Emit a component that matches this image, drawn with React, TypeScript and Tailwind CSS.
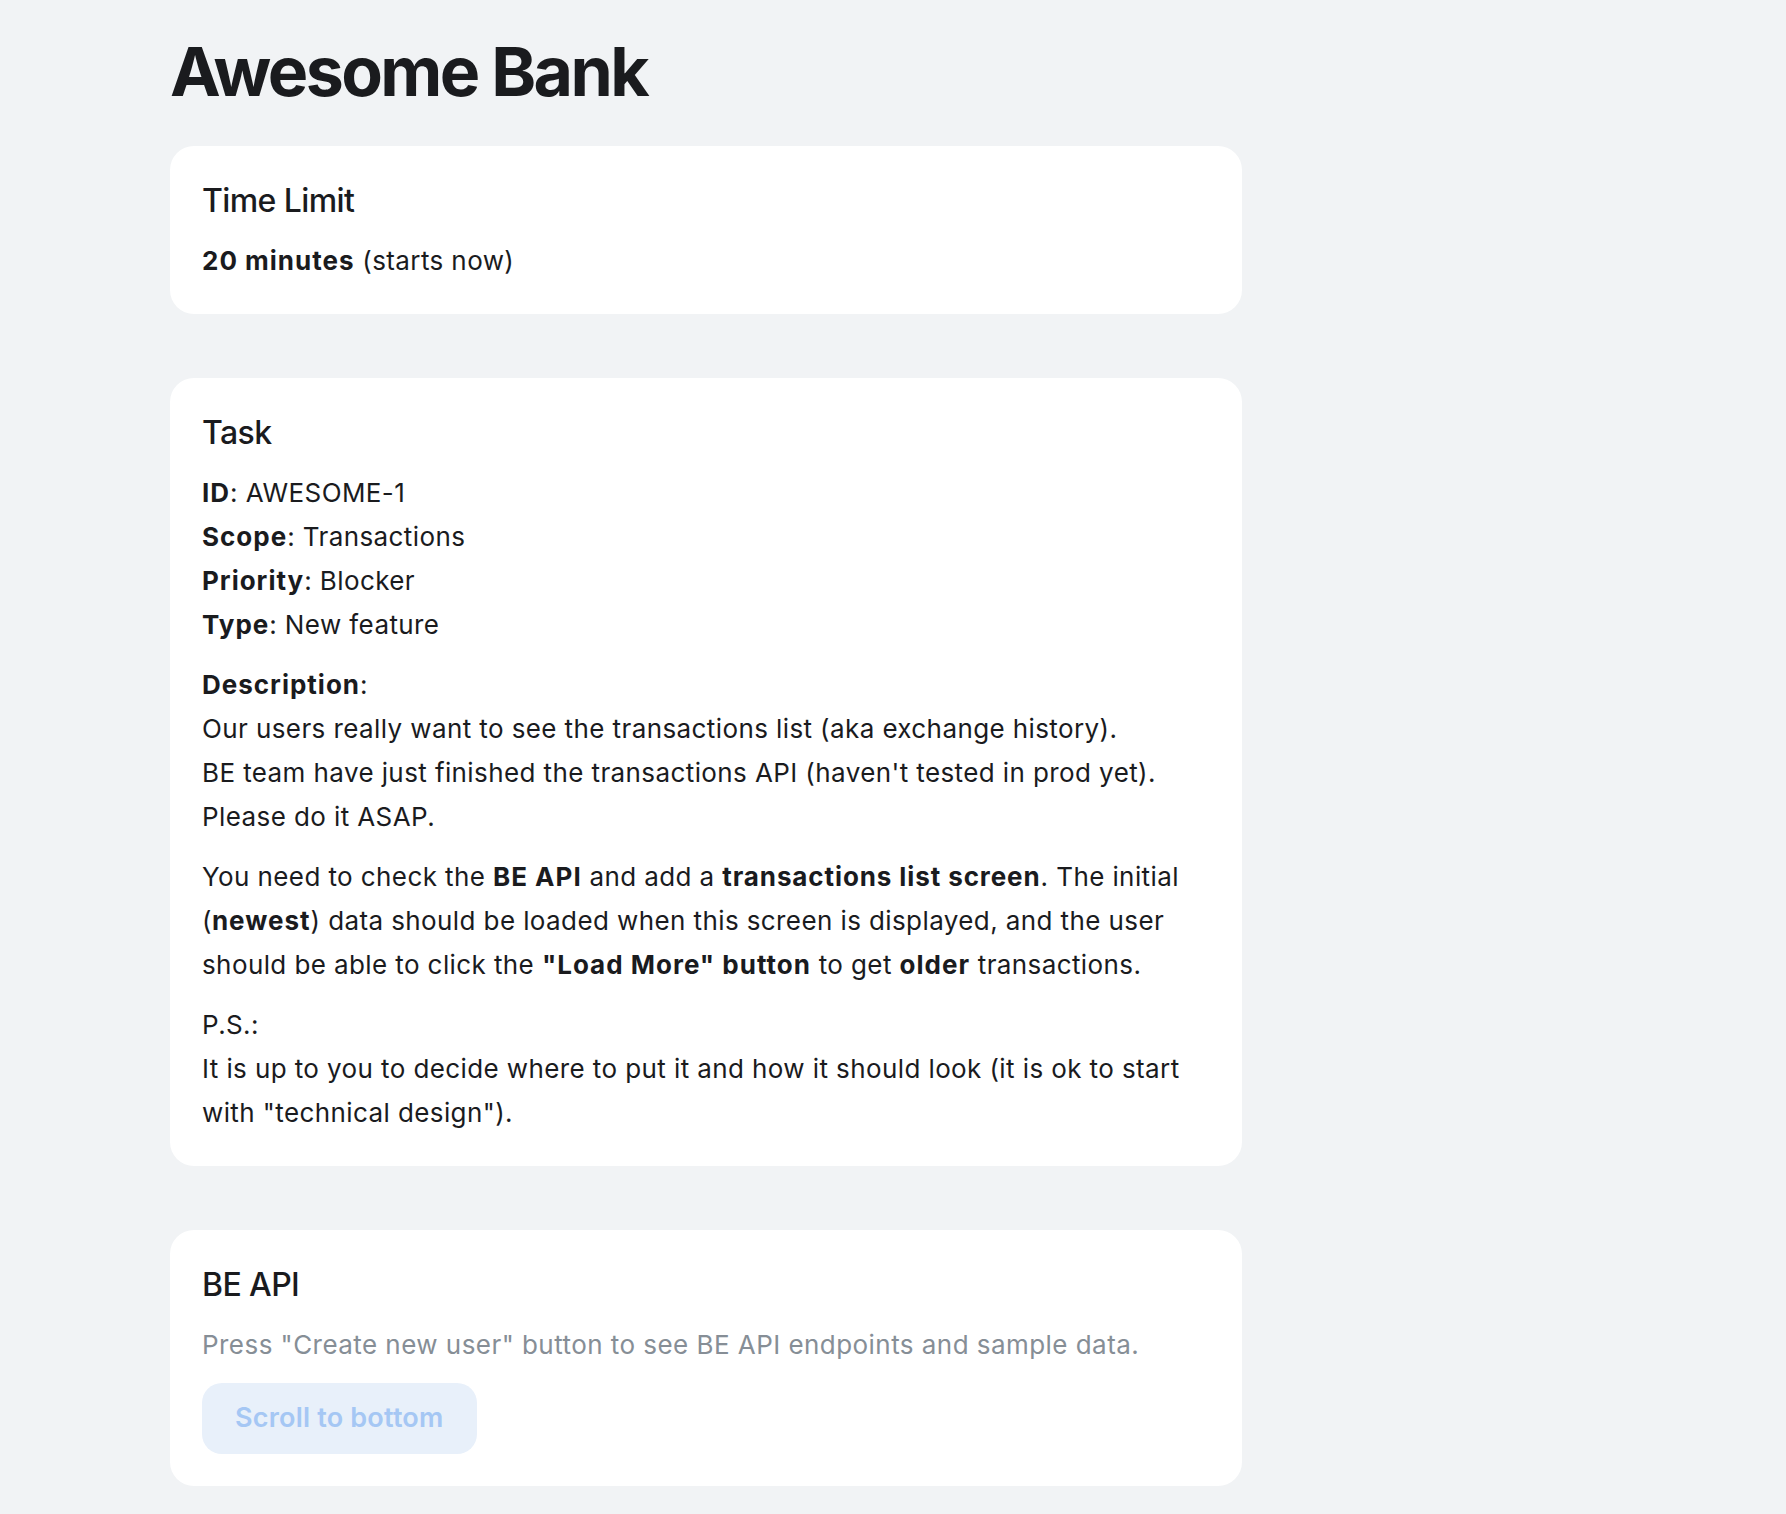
export default function App() {
    return (
        <div className="min-h-screen bg-[#f1f3f5] font-['Inter',sans-serif] text-[#1a1b1e]">
            <div className="pl-[170px] pt-[31px] pb-[40px]">

                <h1 className="text-[68px] leading-[1.2] font-bold tracking-[-2.6px] mb-[33px]">
                    Awesome Bank
                </h1>

                <div className="w-[1072px] flex flex-col gap-[64px]">

                    <section className="bg-white rounded-[24px] px-8 pt-8 pb-[31px]">
                        <h2 className="text-[32px] leading-[46px] font-medium tracking-[-0.6px] mb-[15px]">Time Limit</h2>
                        <p className="text-[26px] leading-[44px] tracking-[0.4px]">
                            <b className="font-bold tracking-[1px]">20 minutes</b> (starts now)
                        </p>
                    </section>

                    <section className="bg-white rounded-[24px] px-8 pt-8 pb-[31px] text-[26px] leading-[44px] tracking-[0.4px]">
                        <h2 className="text-[32px] leading-[46px] font-medium tracking-[-0.6px] mb-[15px]">Task</h2>
                        <p>
                            <b className="font-bold tracking-[1px]">ID</b>: AWESOME-1
                            <br />
                            <b className="font-bold tracking-[1px]">Scope</b>: Transactions
                            <br />
                            <b className="font-bold tracking-[1px]">Priority</b>: Blocker
                            <br />
                            <b className="font-bold tracking-[1px]">Type</b>: New feature
                        </p>
                        <p className="mt-4">
                            <b className="font-bold tracking-[1px]">Description</b>:
                            <br />
                            Our users really want to see the transactions list (aka exchange history).
                            <br />
                            BE team have just finished the transactions API (haven't tested in prod yet).
                            <br />
                            Please do it ASAP.
                        </p>
                        <p className="mt-4">
                            You need to check the <b className="font-bold tracking-[1px]">BE API</b> and add a{" "}
                            <b className="font-bold tracking-[0.9px]">transactions list screen</b>. The initial (
                            <b className="font-bold tracking-[1px]">newest</b>) data should be loaded when this screen is
                            displayed, and the user should be able to click the{" "}
                            <b className="font-bold tracking-[1px]">"Load More" button</b> to get{" "}
                            <b className="font-bold tracking-[1px]">older</b> transactions.
                        </p>
                        <p className="mt-4">
                            P.S.:
                            <br />
                            It is up to you to decide where to put it and how it should look (it is ok to
                            start with "technical design").
                        </p>
                    </section>

                    <section className="bg-white rounded-[24px] px-8 pt-8 pb-8">
                        <h2 className="text-[32px] leading-[46px] font-medium tracking-[-0.6px] mb-[15px]">BE API</h2>
                        <p className="text-[26px] leading-[44px] tracking-[0.45px] text-[#868e96]">
                            Press "Create new user" button to see BE API endpoints and sample data.
                        </p>
                        <button
                            disabled
                            className="mt-4 h-[71px] px-[33px] rounded-[20px] bg-[#e8f0fa] text-[#a5c7f4] text-[27px] font-semibold tracking-[0.2px]"
                        >
                            Scroll to bottom
                        </button>
                    </section>

                </div>
            </div>
        </div>
    );
}
